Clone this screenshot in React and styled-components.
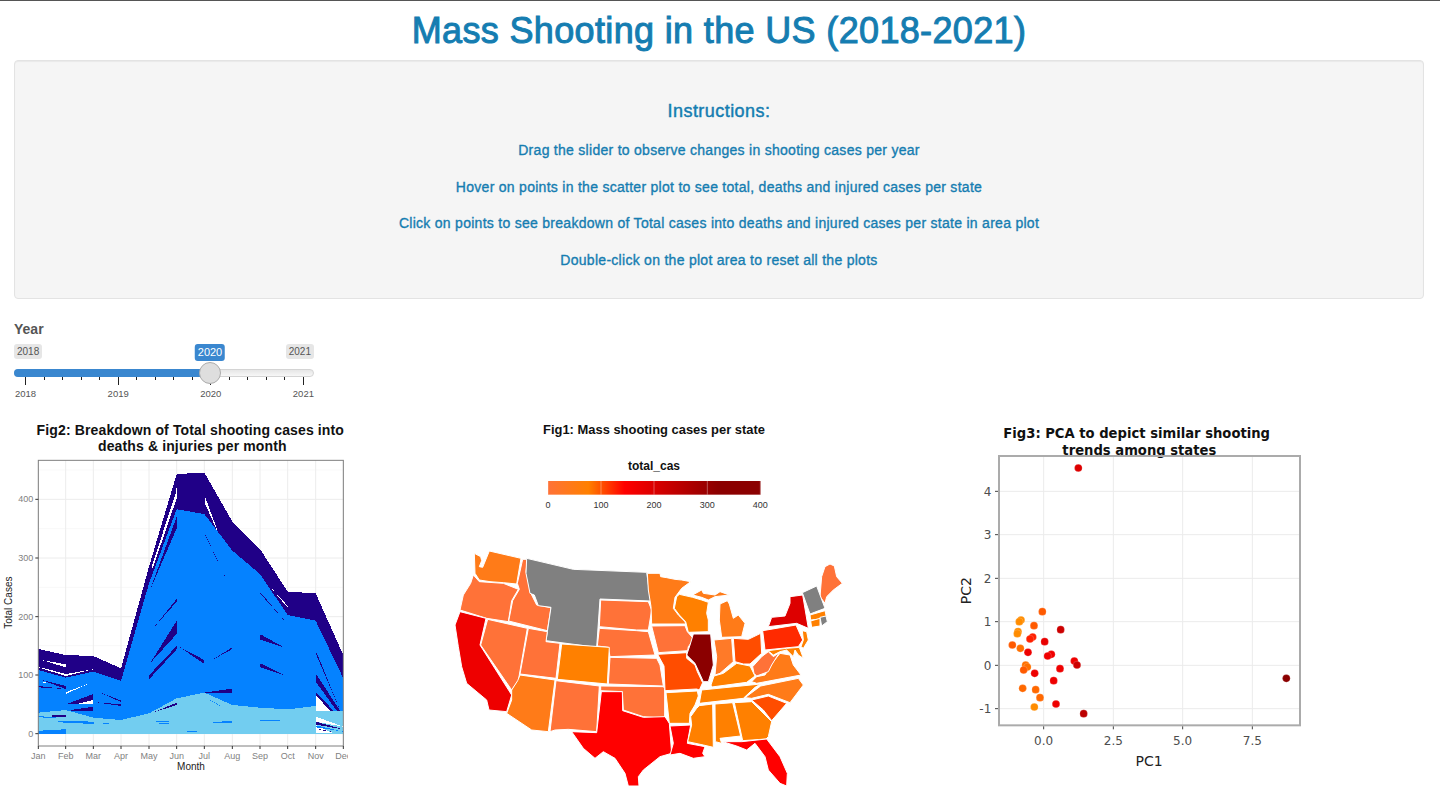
import React from "react";
import styled, { createGlobalStyle } from "styled-components";

const Global = createGlobalStyle`
  html, body { margin: 0; padding: 0; background: #fff; height: 786px; overflow: hidden; }
  body { font-family: "Liberation Sans", Arial, sans-serif; }
`;

const Page = styled.div`
  height: 786px;
  overflow: hidden;
  border-top: 1px solid #555;
  box-sizing: border-box;
`;
const Container = styled.div`
  padding: 0 16px 0 14px;
`;
const Title = styled.h1`
  margin: 0;
  height: 59px;
  line-height: 59px;
  text-align: center;
  font-size: 36px;
  font-weight: 400;
  letter-spacing: 0.35px;
  -webkit-text-stroke: 1px #157db1;
  color: #157db1;
`;
const Well = styled.section`
  box-sizing: border-box;
  height: 239px;
  padding: 40px 0 0;
  background: #f5f5f5;
  border: 1px solid #e3e3e3;
  border-radius: 4px;
  box-shadow: inset 0 1px 1px rgba(0, 0, 0, 0.05);
  text-align: center;
  color: #157db1;
`;
const WellHeading = styled.h3`
  margin: 0 0 20px;
  font-size: 18px;
  line-height: 20px;
  font-weight: 400;
  letter-spacing: 0.45px;
  -webkit-text-stroke: 0.45px #157db1;
`;
const WellLine = styled.p`
  margin: 0 0 17px;
  font-size: 14px;
  line-height: 19.7px;
  font-weight: 400;
  letter-spacing: 0.28px;
  -webkit-text-stroke: 0.35px #157db1;
`;

const SliderBlock = styled.div`
  width: 300px;
  padding-top: 22px;
`;
const SliderLabel = styled.label`
  display: block;
  font-size: 14px;
  line-height: 16px;
  font-weight: 700;
  color: #555;
  margin-bottom: 7px;
`;
const Slider = styled.div`
  position: relative;
  height: 62px;
`;
const EndLabels = styled.div`
  display: flex;
  justify-content: space-between;
`;
const EndLabel = styled.span`
  padding: 1px 3px;
  height: 13px;
  line-height: 13px;
  font-size: 10px;
  color: #555;
  background: #e6e6e6;
  border-radius: 3px;
`;
const FromLabel = styled.span`
  position: absolute;
  top: 0;
  transform: translateX(-50%);
  padding: 1px 3px;
  line-height: 15px;
  font-size: 11px;
  color: #fff;
  background: #3a87cf;
  border-radius: 3px;
`;
const Track = styled.div`
  position: relative;
  box-sizing: border-box;
  height: 8px;
  margin-top: 10px;
  border: 1px solid #d4d4d4;
  border-radius: 4px;
  background: linear-gradient(#e6e6e6, #f7f7f7);
`;
const Fill = styled.div`
  position: absolute;
  left: -1px;
  top: -1px;
  height: 8px;
  background: #3a87cf;
  border-radius: 4px 0 0 4px;
`;
const Handle = styled.div`
  position: absolute;
  top: -8px;
  box-sizing: border-box;
  width: 22px;
  height: 22px;
  margin-left: -11px;
  border-radius: 50%;
  background: #dedede;
  border: 1px solid #ababab;
`;
const Ticks = styled.div`
  display: flex;
  justify-content: space-between;
  align-items: flex-start;
  margin: 0 10px 0 11px;
  height: 8px;
`;
const Tick = styled.i`
  display: block;
  width: 1px;
  height: ${(p) => (p.$major ? 8 : 3)}px;
  background: #222;
`;
const TickLabels = styled.div`
  display: flex;
  justify-content: space-between;
  margin-top: 3px;
  padding: 0 0 0 1px;
  font-size: 9.5px;
  line-height: 11px;
  color: #555;
`;

const Figures = styled.div`
  display: grid;
  grid-template-columns: 440px 510px 360px;
  margin-top: 14px;
`;
const Figure = styled.svg`
  display: block;
  overflow: hidden;
`;

const MONTHS = ["Jan", "Feb", "Mar", "Apr", "May", "Jun", "Jul", "Aug", "Sep", "Oct", "Nov", "Dec"];
const MX = [115, 197, 280, 363, 447, 530, 613, 697, 780, 863, 947, 1030];
const pts = (a) => a.map((p) => p.join(",")).join(" ");

const DARK = "#200087";
const BLUE = "#0582ff";
const LIGHT = "#72cdf0";

const topDark = [[115,597],[197,615],[280,618],[363,655],[447,350],[530,72],[613,68],[697,215],[780,297],[863,425],[947,430],[1030,615]];
const topBlue = [[115,660],[197,683],[280,665],[363,693],[447,400],[530,178],[613,192],[697,302],[780,372],[863,495],[947,512],[1030,685]];
const topLight = [[115,788],[197,780],[280,803],[363,810],[447,790],[530,745],[613,728],[697,765],[780,773],[863,778],[947,768],[947,782],[1030,782]];

const streaks = [
  [DARK, [[530,200],[530,235],[450,420]]],
  [DARK, [[530,447],[530,455],[458,537]]],
  [DARK, [[530,512],[530,552],[450,640]]],
  [DARK, [[530,588],[530,598],[447,688],[447,676]]],
  [DARK, [[537,590],[613,630],[613,642]]],
  [DARK, [[613,250],[617,255],[687,405]]],
  [DARK, [[633,632],[697,592],[697,597]]],
  [DARK, [[780,430],[784,430],[862,522]]],
  [DARK, [[780,555],[785,555],[855,594],[780,568]]],
  [DARK, [[780,642],[785,642],[855,677],[780,652]]],
  [DARK, [[613,728],[697,716],[697,728]]],
  [DARK, [[125,690],[197,708],[197,717]]],
  [DARK, [[115,708],[197,717],[115,712]]],
  [DARK, [[197,763],[280,732],[280,762]]],
  [DARK, [[212,780],[280,770],[280,782],[212,782]]],
  [DARK, [[290,723],[363,752],[363,756]]],
  [DARK, [[290,757],[363,763],[363,768]]],
  [DARK, [[947,610],[951,610],[1020,780]]],
  [DARK, [[947,670],[1020,782],[1010,782],[947,695]]],
  [DARK, [[460,787],[530,758],[530,765]]],
  ["#fff", [[125,630],[197,643],[197,652]]],
  ["#fff", [[115,652],[130,654],[197,672],[280,658],[197,678]]],
  ["#fff", [[197,727],[268,700],[197,732]]],
  ["#fff", [[232,762],[280,750],[280,762]]],
  ["#fff", [[125,694],[145,700],[125,697]]],
  ["#fff", [[455,350],[527,130],[530,110],[530,145],[458,355]]],
  ["#fff", [[615,140],[652,240],[650,240],[615,160]]],
  ["#fff", [[810,410],[865,470],[860,470]]],
  ["#fff", [[947,725],[1000,782],[947,782]]],
  [DARK, [[947,725],[1000,782],[990,782],[947,735]]],
  ["#fff", [[947,800],[1030,830],[947,815]]],
  [DARK, [[947,815],[1030,838],[947,824]]],
  ["#fff", [[947,825],[1000,850],[947,848]]],
  [DARK, [[947,835],[1000,846],[960,840]]],
  [BLUE, [[947,826],[1030,845],[947,832]]],
  [BLUE, [[115,843],[145,840],[197,838],[197,851],[115,851]]],
  [BLUE, [[115,798],[197,805],[115,802]]],
  [DARK, [[155,795],[197,795],[197,800],[155,800]]],
  [BLUE, [[160,812],[282,815],[282,822],[190,818]]],
  [BLUE, [[468,813],[508,813],[508,816],[468,816]]],
  [BLUE, [[477,819],[508,819],[508,822],[477,822]]],
  [BLUE, [[640,815],[697,814],[697,819],[640,819]]],
  [BLUE, [[780,810],[840,810],[840,813],[780,813]]],
  [BLUE, [[560,843],[590,843],[590,846],[560,846]]],
  [BLUE, [[308,820],[328,820],[328,823],[308,823]]],
  [BLUE, [[615,742],[662,767],[660,768]]],
];

const Fig2 = () => (
  <Figure width="348" height="366" viewBox="0 -90 1044 1098">
    <text x="571" y="-46" textAnchor="middle" fontFamily="Liberation Sans" fontWeight="700" fontSize="42" letterSpacing="0.4" fill="#111">Fig2: Breakdown of Total shooting cases into</text>
    <text x="577" y="2" textAnchor="middle" fontFamily="Liberation Sans" fontWeight="700" fontSize="42" letterSpacing="0.4" fill="#111">deaths &amp; injuries per month</text>
    <g stroke="#f0f0f0" strokeWidth="1.5">
      {[60,236,412,587,763].map((y) => <line key={y} x1="115" x2="1030" y1={y} y2={y} />)}
    </g>
    <g stroke="#ececec" strokeWidth="3">
      {[148,324,500,675,851].map((y) => <line key={y} x1="115" x2="1030" y1={y} y2={y} />)}
      {MX.map((x) => <line key={x} x1={x} x2={x} y1="30" y2="888" />)}
    </g>
    <g shapeRendering="crispEdges">
      <polygon fill={DARK} points={pts([...topDark, [1030,851], [115,851]])} />
      <polygon fill={BLUE} points={pts([...topBlue, [1030,851], [115,851]])} />
      <polygon fill={LIGHT} points={pts([...topLight, [1030,851], [115,851]])} />
      {streaks.map(([c, p], i) => <polygon key={i} fill={c} points={pts(p)} />)}
    </g>
    <rect x="115" y="31" width="915" height="857" fill="none" stroke="#7f7f7f" strokeWidth="3" />
    <g stroke="#333" strokeWidth="3">
      {MX.map((x) => <line key={x} x1={x} x2={x} y1="888" y2="897" />)}
      {[148,324,500,675,851].map((y) => <line key={y} x1="106" x2="115" y1={y} y2={y} />)}
    </g>
    <g fontFamily="Liberation Sans" fontSize="27" fill="#7f7f7f">
      {MONTHS.map((m, i) => <text key={m} x={MX[i]} y="926" textAnchor="middle">{m}</text>)}
      {[[148,"400"],[324,"300"],[500,"200"],[675,"100"],[851,"0"]].map(([y, t]) => <text key={t} x="100" y={y + 9} textAnchor="end">{t}</text>)}
    </g>
    <text x="573" y="961" textAnchor="middle" fontFamily="Liberation Sans" fontSize="30" fill="#222">Month</text>
    <text transform="translate(35,458) rotate(-90)" textAnchor="middle" fontFamily="Liberation Sans" fontSize="30" fill="#222">Total Cases</text>
  </Figure>
);

const OR_A = "#ff7238";
const OR_B = "#ff7b18";
const OR_C = "#ff8000";
const RED = "#ff0000";
const DEEP = "#ff4d00";
const GREY = "#808080";

const west = [
  [OR_B, [[103,40],[122,50],[125,62],[118,80],[128,82],[148,33],[243,55],[230,132],[190,128],[150,125],[118,120],[105,100]]],
  [OR_A, [[100,105],[118,125],[190,130],[235,148],[215,182],[205,245],[140,235],[60,210],[70,165],[92,130]]],
  ["#ee0000", [[60,215],[138,235],[120,315],[215,465],[200,515],[147,510],[140,480],[80,430],[65,380],[55,320],[45,255]]],
  [OR_A, [[143,238],[262,265],[235,422],[215,450],[122,315]]],
  [OR_A, [[262,58],[258,95],[275,165],[290,195],[333,203],[322,272],[206,243],[218,182],[238,148],[232,130],[248,58]]],
  [GREY, [[260,55],[400,88],[620,97],[632,183],[480,177],[470,322],[318,302],[333,202],[295,197],[283,165],[270,160],[258,100]]],
  [OR_A, [[482,180],[625,185],[635,210],[625,270],[590,270],[478,260]]],
  [OR_A, [[478,265],[590,272],[625,275],[645,345],[510,350],[505,322],[472,318]]],
  [OR_A, [[265,265],[322,275],[318,305],[360,310],[348,415],[240,402]]],
  [OR_C, [[365,312],[508,322],[502,432],[352,418]]],
  [OR_B, [[240,405],[345,420],[325,575],[275,570],[200,520],[215,480],[215,450],[233,422]]],
  [OR_A, [[348,422],[478,438],[470,575],[385,568],[345,570],[330,575]]],
  [OR_A, [[510,352],[650,355],[660,375],[670,438],[505,432]]],
  [OR_A, [[482,438],[670,440],[674,445],[674,535],[610,530],[550,510],[547,455],[482,452]]],
  [RED, [[484,455],[547,455],[548,512],[610,532],[675,530],[688,550],[695,640],[660,650],[610,690],[595,710],[597,738],[565,738],[555,700],[525,655],[490,635],[465,655],[430,625],[395,575],[470,578]]],
];

const east = [
  [OR_B, [[22,100],[60,100],[62,110],[80,113],[105,118],[125,120],[152,125],[125,145],[105,172],[100,205],[115,225],[135,245],[137,252],[35,252],[33,200],[25,150]]],
  [OR_C, [[110,170],[118,163],[158,172],[185,180],[205,187],[200,220],[205,240],[205,275],[145,277],[137,245],[118,225],[103,205]]],
  [OR_B, [[158,165],[185,150],[190,160],[225,165],[240,155],[268,165],[225,170],[205,180],[185,172]]],
  [OR_B, [[240,192],[262,182],[268,192],[280,235],[295,225],[315,250],[305,290],[245,292],[238,240]]],
  [OR_A, [[35,258],[135,257],[142,275],[162,298],[145,320],[143,332],[55,338],[48,310]]],
  ["#8b0000", [[160,282],[212,282],[220,375],[205,425],[190,425],[165,370],[140,345],[150,315]]],
  [DEEP, [[53,343],[140,338],[140,355],[165,375],[172,395],[188,428],[178,450],[170,447],[75,452],[72,378]]],
  ["#ff7a28", [[222,300],[275,295],[280,365],[240,400],[225,405],[230,350]]],
  [DEEP, [[280,295],[325,298],[362,280],[365,340],[330,372],[310,372],[285,365]]],
  [OR_C, [[213,435],[222,408],[250,400],[290,370],[330,378],[345,408],[320,427],[215,441]]],
  [OR_C, [[185,450],[362,432],[345,442],[310,475],[178,490]]],
  [OR_C, [[78,458],[172,453],[175,468],[165,495],[150,520],[148,550],[88,550]]],
  [RED, [[90,558],[152,555],[142,610],[195,620],[188,640],[195,650],[160,655],[120,640],[90,645],[100,610]]],
  [OR_C, [[178,497],[218,492],[220,622],[190,615],[143,605],[155,555],[152,530],[170,505]]],
  [OR_C, [[225,492],[278,488],[302,588],[240,595],[245,610],[226,605]]],
  [OR_C, [[283,488],[335,485],[395,545],[385,590],[378,597],[308,602]]],
  [RED, [[248,605],[305,605],[380,597],[420,650],[442,700],[440,738],[420,730],[385,690],[375,650],[345,610],[320,630],[290,618]]],
  [DEEP, [[335,480],[385,468],[440,490],[395,542],[370,510]]],
  [OR_B, [[315,473],[362,438],[475,415],[490,435],[450,488],[385,463],[335,475]]],
  [OR_B, [[335,425],[350,410],[375,405],[400,365],[420,340],[450,345],[460,375],[483,405],[350,430]]],
  [OR_A, [[338,380],[365,350],[385,335],[400,350],[418,338],[395,375],[385,395],[350,408],[342,400]]],
  ["#ff2a00", [[368,272],[468,255],[488,300],[475,320],[375,330]]],
  ["#dd0000", [[385,260],[395,232],[435,228],[450,190],[450,170],[488,165],[505,265],[470,250]]],
  [OR_C, [[487,272],[500,275],[505,300],[490,325],[483,320],[490,300]]],
  [OR_C, [[375,333],[440,325],[478,322],[490,355],[475,345],[465,330],[460,350],[440,330],[420,335],[400,345],[385,333]]],
  [OR_A, [[570,72],[583,78],[590,110],[607,130],[580,150],[560,170],[555,190],[540,170],[545,110],[555,80]]],
  [GREY, [[487,158],[530,138],[555,205],[510,222]]],
  [OR_C, [[510,225],[555,212],[560,235],[512,240]]],
  [OR_C, [[512,243],[540,235],[540,258],[515,262]]],
  [GREY, [[540,232],[558,228],[562,245],[545,258]]],
];

const Fig1 = () => (
  <Figure width="420" height="366" viewBox="0 -360 1260 1098">
    <defs>
      <linearGradient id="scale">
        <stop offset="0" stopColor="#ff7238" />
        <stop offset="0.19" stopColor="#ff8000" />
        <stop offset="0.36" stopColor="#ff0000" />
        <stop offset="0.6" stopColor="#c00000" />
        <stop offset="0.8" stopColor="#8b0000" />
        <stop offset="1" stopColor="#8b0000" />
      </linearGradient>
    </defs>
    <text x="642" y="-318" textAnchor="middle" fontFamily="Liberation Sans" fontWeight="700" fontSize="38.8" fill="#111">Fig1: Mass shooting cases per state</text>
    <text x="642" y="-210" textAnchor="middle" fontFamily="Liberation Sans" fontWeight="700" fontSize="36" fill="#111">total_cas</text>
    <rect x="324" y="-177" width="638" height="41" fill="url(#scale)" />
    <g stroke="#fff" strokeOpacity="0.5" strokeWidth="2">
      {[324,483,642,802,961].map((x) => <line key={x} x1={x} x2={x} y1="-177" y2="-136" />)}
    </g>
    <g fontFamily="Liberation Sans" fontSize="27" fill="#333" textAnchor="middle">
      {[[324,"0"],[483,"100"],[642,"200"],[802,"300"],[961,"400"]].map(([x, t]) => <text key={t} x={x} y="-96">{t}</text>)}
    </g>
    <g stroke="#fff" strokeWidth="3" strokeLinejoin="round">
      {west.map(([c, p], i) => <polygon key={i} fill={c} points={pts(p)} />)}
      <g transform="translate(600,0)">
        {east.map(([c, p], i) => <polygon key={i} fill={c} points={pts(p)} />)}
      </g>
    </g>
  </Figure>
);

const dots = [
  [385,144,"#dd0000"],[277,575,"#ff5a00"],[213,600,"#ff8c00"],[208,605,"#ff8c00"],[252,617,"#ff5a00"],[332,629,"#cc0000"],
  [204,635,"#ff8c00"],[202,641,"#ff8c00"],[248,651,"#ff2000"],[240,657,"#ff2000"],[284,665,"#e80000"],[187,675,"#ff5a00"],
  [211,685,"#ff7000"],[234,697,"#ee0000"],[304,703,"#f00000"],[293,708,"#f00000"],[373,723,"#ee0000"],[381,735,"#cc0000"],
  [227,735,"#ff7000"],[232,741,"#ff7000"],[221,750,"#ff5a00"],[330,746,"#ee0000"],[254,760,"#ee0000"],[311,782,"#ee0000"],
  [218,805,"#ff6800"],[257,809,"#ff6800"],[270,833,"#ff6800"],[318,852,"#ee0000"],[253,861,"#ff8c00"],[401,881,"#bb0000"],[1009,775,"#8b0000"],
];

const Fig3 = () => (
  <Figure width="360" height="366" viewBox="0 0 1080 1098">
    <g fontFamily="DejaVu Sans" fontWeight="700" fontSize="39.5" fill="#111" textAnchor="middle">
      <text x="560" y="54">Fig3: PCA to depict similar shooting</text>
      <text x="568" y="104">trends among states</text>
    </g>
    <g stroke="#ebebeb" strokeWidth="3">
      {[281,490,698,907].map((x) => <line key={x} x1={x} x2={x} y1="108" y2="916" />)}
      {[214,344,475,605,736,866].map((y) => <line key={y} x1="147" x2="1050" y1={y} y2={y} />)}
    </g>
    {dots.map(([x, y, c], i) => <circle key={i} cx={x} cy={y} r="11.5" fill={c} stroke="#fff" strokeOpacity="0.35" strokeWidth="1.5" />)}
    <rect x="147" y="108" width="903" height="808" fill="none" stroke="#ababab" strokeWidth="6" />
    <g stroke="#444" strokeWidth="3">
      {[281,490,698,907].map((x) => <line key={x} x1={x} x2={x} y1="919" y2="928" />)}
      {[214,344,475,605,736,866].map((y) => <line key={y} x1="135" x2="144" y1={y} y2={y} />)}
    </g>
    <g fontFamily="DejaVu Sans" fontSize="36" fill="#4d4d4d">
      {[[281,"0.0"],[490,"2.5"],[698,"5.0"],[907,"7.5"]].map(([x, t]) => <text key={t} x={x} y="975" textAnchor="middle">{t}</text>)}
      {[[214,"4"],[344,"3"],[475,"2"],[605,"1"],[736,"0"],[866,"-1"]].map(([y, t]) => <text key={t} x="124" y={y + 13} textAnchor="end">{t}</text>)}
    </g>
    <g fontFamily="DejaVu Sans" fontSize="42" fill="#222" textAnchor="middle">
      <text x="597" y="1038">PC1</text>
      <text transform="translate(64,512) rotate(-90)">PC2</text>
    </g>
  </Figure>
);

const tickCount = 16;

export default function App() {
  return (
    <Page>
      <Global />
      <Container>
        <Title>Mass Shooting in the US (2018-2021)</Title>
        <Well>
          <WellHeading>Instructions:</WellHeading>
          <WellLine>Drag the slider to observe changes in shooting cases per year</WellLine>
          <WellLine>Hover on points in the scatter plot to see total, deaths and injured cases per state</WellLine>
          <WellLine>Click on points to see breakdown of Total cases into deaths and injured cases per state in area plot</WellLine>
          <WellLine>Double-click on the plot area to reset all the plots</WellLine>
        </Well>
        <SliderBlock>
          <SliderLabel>Year</SliderLabel>
          <Slider>
            <EndLabels>
              <EndLabel>2018</EndLabel>
              <EndLabel>2021</EndLabel>
            </EndLabels>
            <FromLabel style={{ left: 196 }}>2020</FromLabel>
            <Track>
              <Fill style={{ width: 196 }} />
              <Handle style={{ left: 195 }} />
            </Track>
            <Ticks>
              {Array.from({ length: tickCount }, (_, i) => <Tick key={i} $major={i % 5 === 0} />)}
            </Ticks>
            <TickLabels>
              <span>2018</span><span>2019</span><span>2020</span><span>2021</span>
            </TickLabels>
          </Slider>
        </SliderBlock>
      </Container>
      <Figures>
        <Fig2 />
        <Fig1 />
        <Fig3 />
      </Figures>
    </Page>
  );
}
